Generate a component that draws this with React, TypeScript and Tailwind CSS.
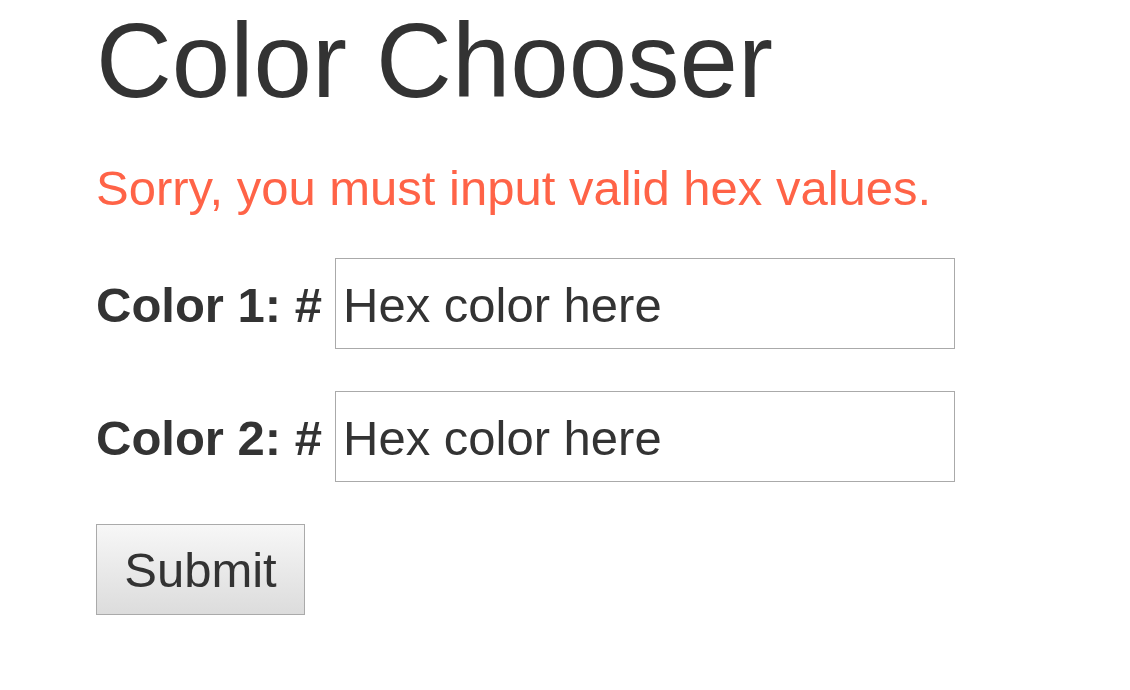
export default function App() {
  return (
    <div className="min-h-[690px] bg-white pl-[96px] text-[#333333] font-['Liberation_Sans',Arial,sans-serif]">
      <h1 className="pt-[8px] text-[105px] leading-[105px] font-normal">Color Chooser</h1>

      <p className="mt-[51px] text-[49px] leading-[48px] text-[#ff6347]">
        Sorry, you must input valid hex values.
      </p>

      <form className="mt-[46px] flex flex-col gap-[42px]" onSubmit={(e) => e.preventDefault()}>
        {[1, 2].map((n) => (
          <div key={n} className="flex items-center">
            <label
              htmlFor={`color${n}`}
              className="mr-[13px] mt-[3px] text-[49px] leading-[48px] font-bold whitespace-nowrap"
            >
              Color {n}: #
            </label>
            <input
              id={`color${n}`}
              type="text"
              placeholder="Hex color here"
              className="h-[91px] w-[620px] border border-[#aaaaaa] bg-white pl-[7px] pt-[3px] text-[49px] text-[#333333] outline-none placeholder:text-[#333333]"
            />
          </div>
        ))}
        <div>
          <button
            type="submit"
            className="h-[91px] w-[209px] border border-[#aaaaaa] bg-gradient-to-b from-[#f7f7f7] to-[#dcdcdc] text-[49px] leading-[48px] text-[#333333]"
          >
            Submit
          </button>
        </div>
      </form>
    </div>
  );
}
